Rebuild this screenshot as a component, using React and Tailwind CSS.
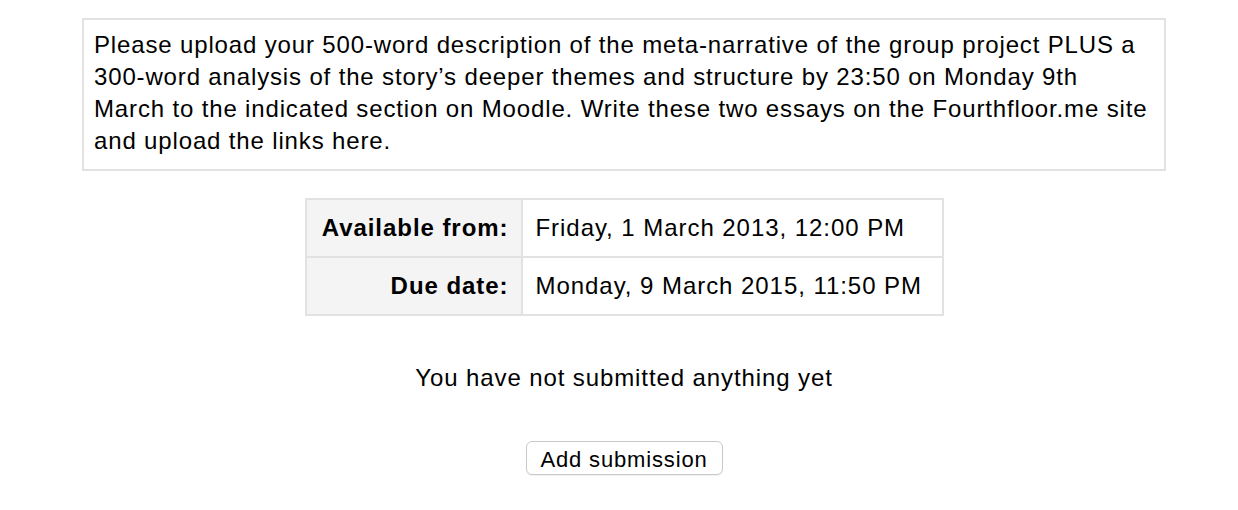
import React from 'react';

const dates = [
    { label: 'Available from:', value: 'Friday, 1 March 2013, 12:00 PM' },
    { label: 'Due date:', value: 'Monday, 9 March 2015, 11:50 PM' },
];

const App = () => {
    return (
        <div className="min-h-[510px] bg-white text-black" style={{ fontFamily: '"Liberation Sans", Arial, sans-serif' }}>
            <div className="ml-[82px] w-[1084px] pt-[18px]">
                {/* Intro text */}
                <div className="border-2 border-[#e2e2e2] px-[10px] pt-[9px] pb-[12px] text-[24px] leading-[32px] tracking-[0.85px]">
                    Please upload your 500-word description of the meta-narrative of the group project PLUS a 300-word analysis of the story’s deeper themes and structure by 23:50 on Monday 9th March to the indicated section on Moodle. Write these two essays on the Fourthfloor.me site and upload the links here.
                </div>

                {/* Dates table */}
                <div className="flex justify-center mt-[27px]">
                    <table className="border-collapse text-[24px] tracking-[0.95px]">
                        <tbody>
                            {dates.map(d => (
                                <tr key={d.label} className="h-[58px]">
                                    <th className="border-2 border-[#e2e2e2] bg-[#f4f4f4] text-right font-bold pl-[13px] pr-[12px] w-[216px]">{d.label}</th>
                                    <td className="border-2 border-[#e2e2e2] px-[13px] w-[421px]">{d.value}</td>
                                </tr>
                            ))}
                        </tbody>
                    </table>
                </div>

                {/* Status */}
                <p className="text-center text-[24px] leading-[28px] tracking-[0.9px] mt-[48px]">You have not submitted anything yet</p>

                <div className="flex justify-center mt-[49px]">
                    <button className="h-[34px] w-[197px] border border-[#c9c9c9] rounded-[6px] bg-white text-[22px] leading-none tracking-[0.85px] pt-[3px] shadow-[0_1px_1px_rgba(0,0,0,0.06)]">
                        Add submission
                    </button>
                </div>
            </div>
        </div>
    );
};

export default App;
